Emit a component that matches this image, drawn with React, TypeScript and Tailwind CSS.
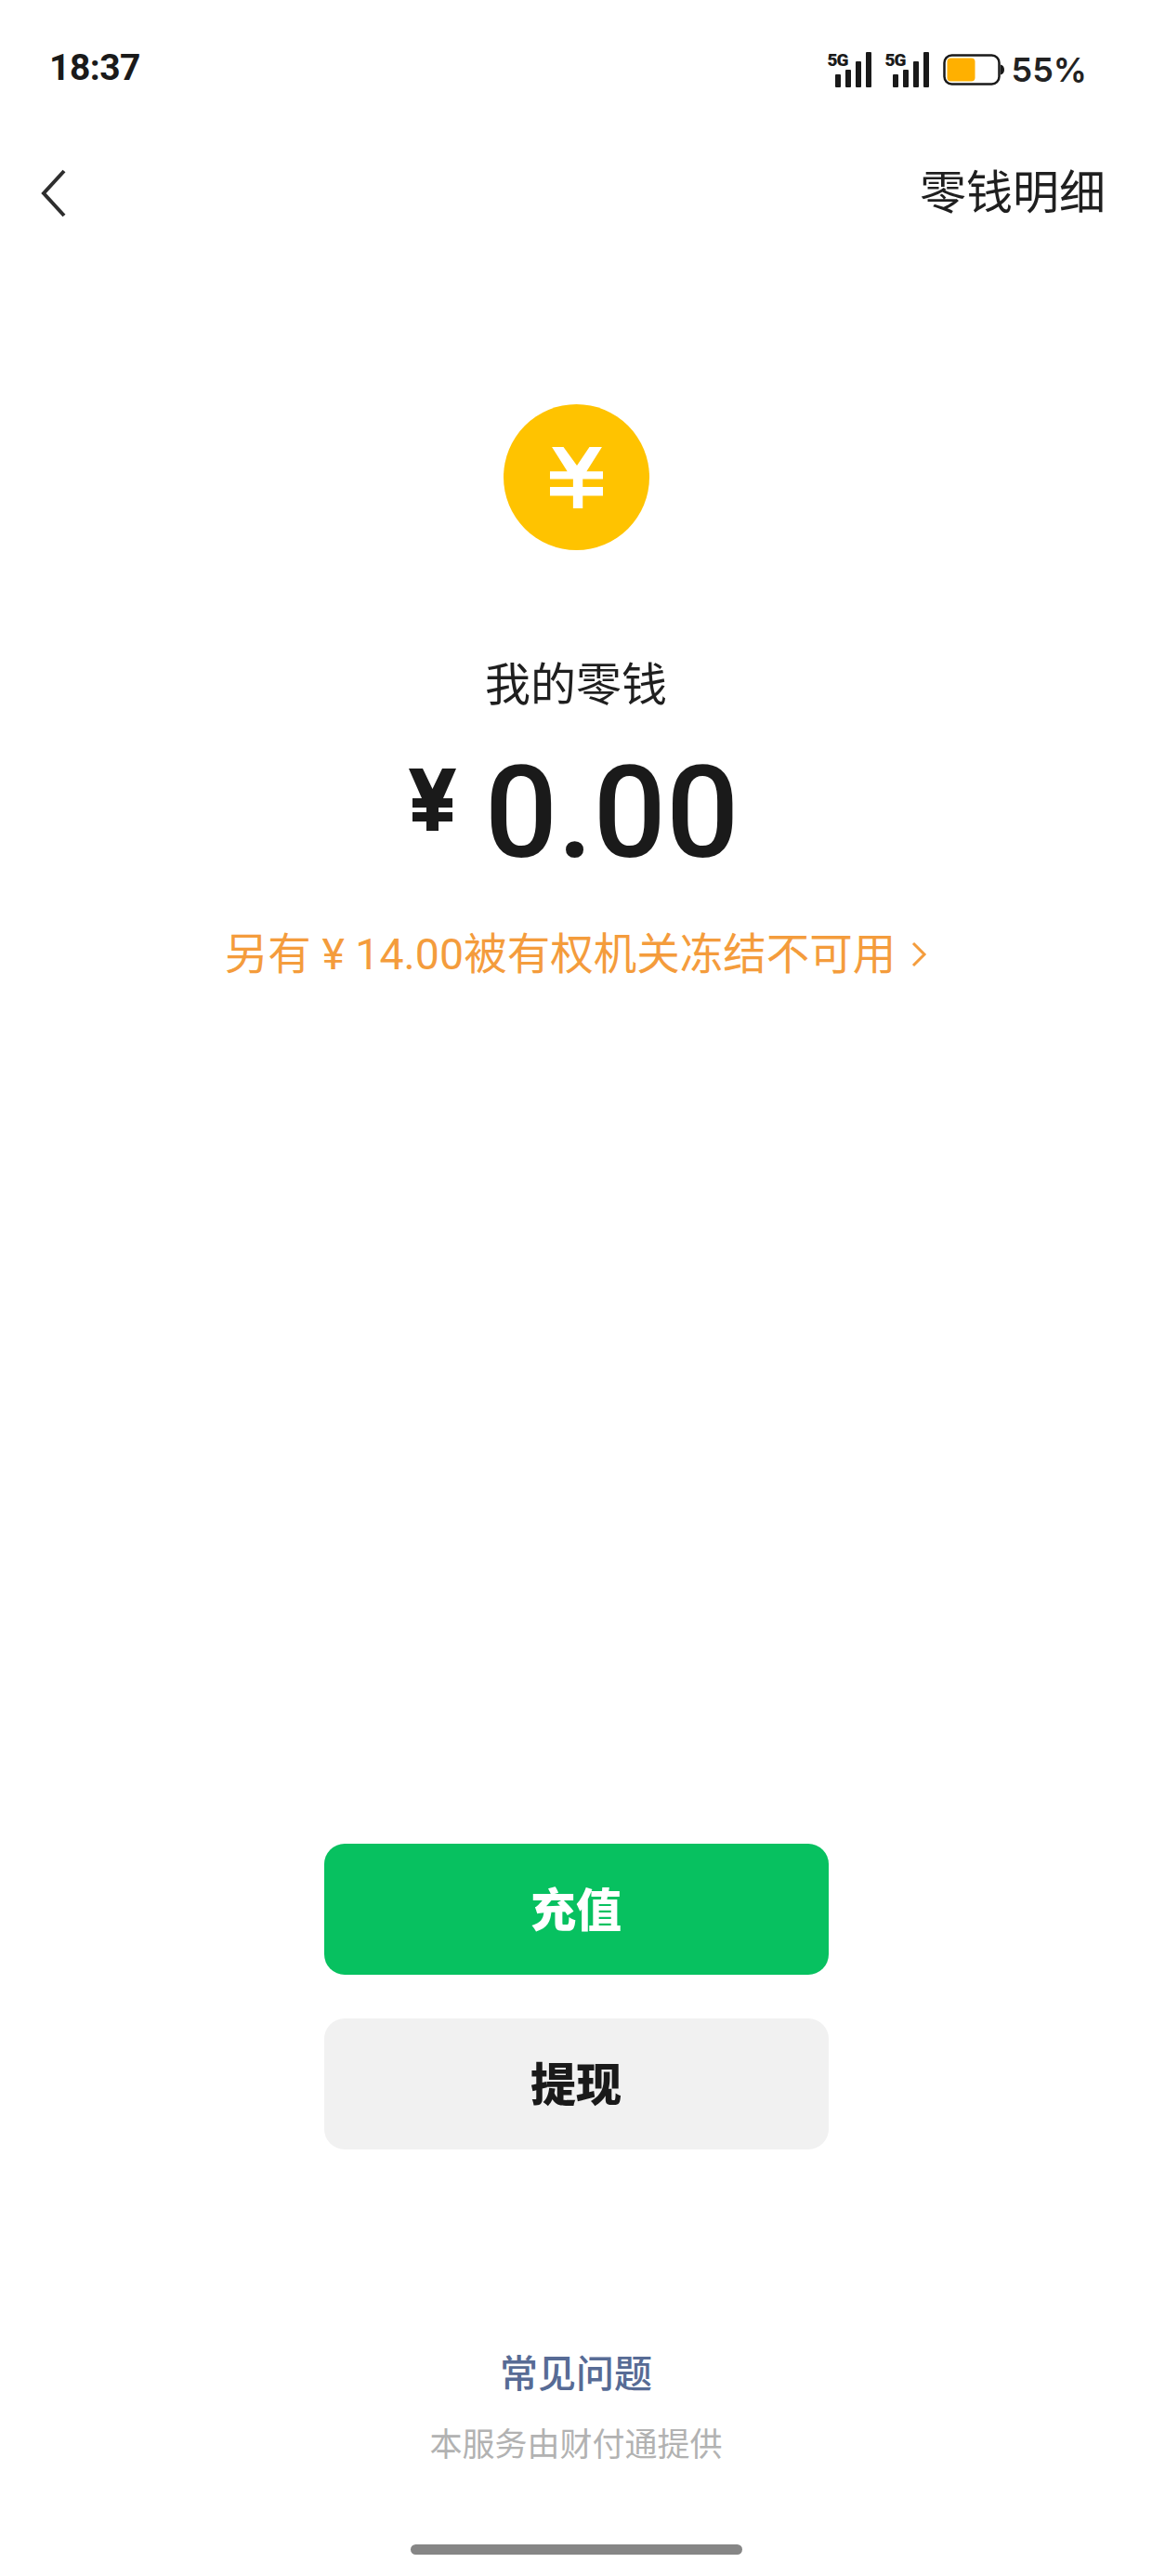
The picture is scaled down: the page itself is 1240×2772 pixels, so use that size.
const CJK = "font-['Roboto','Noto_Sans_CJK_SC',sans-serif]";

function Signal() {
  return (
    <div className="relative w-[47px] h-[38px]">
      <svg width="47" height="38" viewBox="0 0 47 38" className="block">
        <rect x="8" y="24" width="6" height="14" rx="1" fill="#1a1a1a" />
        <rect x="19" y="19" width="6" height="19" rx="1" fill="#1a1a1a" />
        <rect x="30" y="10" width="6" height="28" rx="1" fill="#1a1a1a" />
        <rect x="41" y="0" width="6" height="38" rx="1" fill="#1a1a1a" />
      </svg>
      <span className="absolute left-0 top-0 text-[19px] leading-[18px] font-black tracking-[-1px] text-[#1a1a1a]">5G</span>
    </div>
  );
}

function Battery() {
  return (
    <svg width="66" height="34" viewBox="0 0 66 34" className="block">
      <rect x="1.500" y="1.500" width="59" height="31" rx="8" fill="#fff" stroke="#1a1a1a" strokeWidth="2.500" />
      <rect x="4.500" y="4.500" width="30" height="25" rx="4" fill="#ffb000" />
      <path d="M62 11.500c2.500 0.500 4 2.500 4 5.500s-1.500 5-4 5.500z" fill="#1a1a1a" />
    </svg>
  );
}

export default function App() {
  return (
    <div className={`${CJK} w-[1240px] h-[2772px] bg-white flex flex-col items-center text-[#1a1a1a] overflow-hidden`}>
      <div className="w-full h-[148px] pt-[50px] pl-[53px] pr-[70px] flex justify-between items-start">
        <span className="text-[39px] leading-[46px] font-bold tracking-[-0.5px]">18:37</span>
        <div className="flex items-center gap-[15px] mt-[5px]">
          <Signal />
          <Signal />
          <div className="flex items-center gap-[8px]">
            <Battery />
            <span className="font-['Inter',sans-serif] text-[36px] leading-[40px] font-semibold text-[#222]">55%</span>
          </div>
        </div>
      </div>
      <div className="w-full h-[120px] pl-[42px] pr-[50px] flex justify-between items-center">
        <svg width="30" height="54" viewBox="0 0 30 54" fill="none" stroke="#2e2e2e" strokeWidth="4" className="block">
          <path d="M27 3 L5 27 L27 51" />
        </svg>
        <span className="text-[50px] leading-[62px] text-[#1f1f1f]">零钱明细</span>
      </div>
      <div className="w-[157px] h-[157px] rounded-full bg-[#ffc300] flex items-center justify-center mt-[167px]">
        <svg width="57" height="66" viewBox="0 0 55 63" preserveAspectRatio="none" fill="#fff">
          <path d="M2 0H14L28 19L41 0H54L38 25H55V33H34V41H55V50H34V63H24V50H0V41H24V33H0V25H18Z" />
        </svg>
      </div>
      <div className="mt-[112px] text-[49px] leading-[68px] text-[#1f1f1f]">我的零钱</div>
      <div className="mt-[38px] flex items-start h-[130px] pr-[5px]">
        <svg width="51" height="67" viewBox="0 0 51 67" fill="#1a1a1a" className="mt-[17px] mr-[31px]">
          <path d="M0 0H15L25.500 22L36 0H51L37 32H47V42H32V47H47V57H32V67H19V57H4V47H19V42H4V32H14Z" />
        </svg>
        <span className="text-[138px] leading-[130px] font-medium text-[#1a1a1a]">0.00</span>
      </div>
      <div className="mt-[56px] flex items-center text-[46.500px] leading-[62px] text-[#f49c3c]">
        <span>另有 ¥ 14.00被有权机关冻结不可用</span>
        <svg width="18" height="30" viewBox="0 0 18 30" fill="none" stroke="#f49c3c" strokeWidth="3" className="ml-[16px]">
          <path d="M3 3 L15 15 L3 27" />
        </svg>
      </div>
      <button className="mt-[926px] w-[543px] h-[141px] pt-[5px] rounded-[22px] bg-[#07c160] text-white text-[49px] font-black flex items-center justify-center">充值</button>
      <button className="mt-[47px] w-[543px] h-[141px] pt-[5px] rounded-[22px] bg-[#f1f1f1] text-[#1a1a1a] text-[49px] font-black flex items-center justify-center">提现</button>
      <div className="mt-[214px] text-[41px] leading-[56px] font-medium text-[#576b95]">常见问题</div>
      <div className="mt-[25px] text-[35px] leading-[48px] text-[#b2b2b2]">本服务由财付通提供</div>
      <div className="mt-[82px] w-[357px] h-[11px] rounded-full bg-[#868686]"></div>
    </div>
  );
}
